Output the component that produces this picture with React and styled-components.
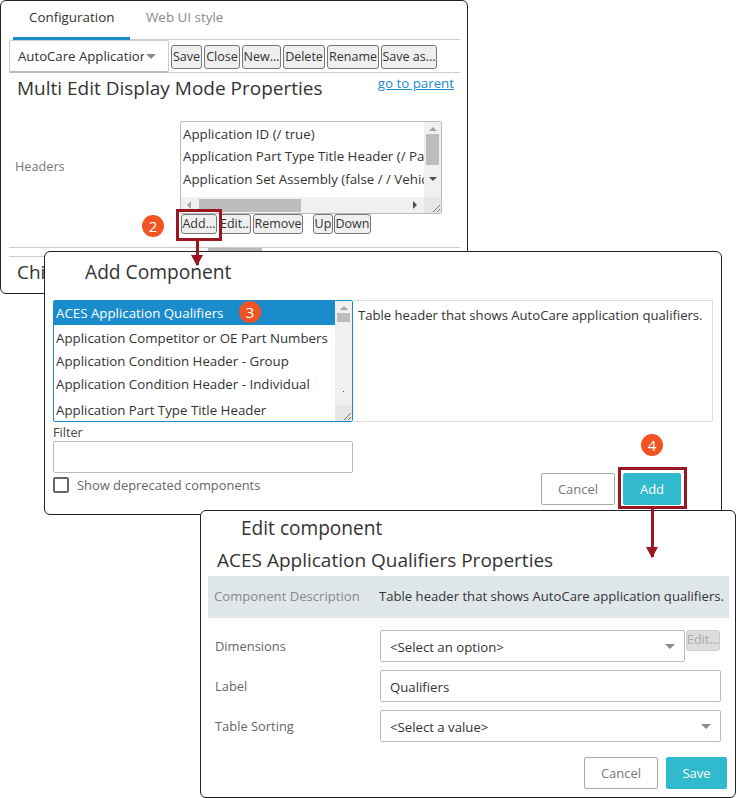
import React from "react";
import styled, { createGlobalStyle } from "styled-components";

const GlobalStyle = createGlobalStyle`
  html, body {
    margin: 0;
    padding: 0;
    background: #fff;
  }
  body {
    font-family: "Open Sans", "Noto Sans", sans-serif;
    font-size: 13px;
    color: #333;
  }
  * {
    box-sizing: border-box;
  }
`;

const Canvas = styled.div`
  position: relative;
  width: 736px;
  height: 798px;
  overflow: hidden;
`;

const Window = styled.section`
  position: absolute;
  left: ${(p) => p.$x}px;
  top: ${(p) => p.$y}px;
  width: ${(p) => p.$w}px;
  height: ${(p) => p.$h}px;
  background: #fff;
  border: 1px solid #222;
  border-radius: 6px;
  display: flex;
  flex-direction: column;
`;

const Tabs = styled.div`
  display: flex;
  margin: 0 7px 0 12px;
  height: 39px;
  border-bottom: 1px solid #ccc;
`;

const Tab = styled.div`
  width: ${(p) => p.$w}px;
  height: ${(p) => (p.$active ? 39 : 38)}px;
  padding: 7px 0 0 ${(p) => p.$pad}px;
  font-size: 13.4px;
  line-height: 18px;
  color: ${(p) => (p.$active ? "#333" : "#888")};
  border-bottom: ${(p) => (p.$active ? "3px solid #1a8ccc" : "none")};
`;

const Toolbar = styled.div`
  display: flex;
  align-items: flex-start;
  gap: 2px;
  margin: 0 7px 0 8px;
  height: 33px;
  border-bottom: 1px solid #ccc;
`;

const FakeDrop = styled.div`
  width: 160px;
  height: 33px;
  border: 1px solid #ccc;
  border-bottom: 2px solid #bbb;
  border-radius: 2px;
  display: flex;
  align-items: center;
  padding-left: 8px;
  font-size: 13.2px;
  color: #333;
`;

const DropText = styled.span`
  width: 126px;
  overflow: hidden;
  white-space: nowrap;
`;

const Caret = styled.span`
  width: 0;
  height: 0;
  margin-left: ${(p) => p.$ml || 0}px;
  border-left: 5px solid transparent;
  border-right: 5px solid transparent;
  border-top: 5px solid #8c8c8c;
`;

const SmallBtn = styled.button`
  width: ${(p) => p.$w}px;
  height: ${(p) => p.$h || 24}px;
  margin-left: ${(p) => p.$ml || 0}px;
  padding: 0;
  font-family: inherit;
  font-size: 12.5px;
  line-height: 1;
  color: ${(p) => (p.disabled ? "#aaa" : "#333")};
  background: ${(p) => (p.disabled ? "#ddd" : "#efefef")};
  border: 1px solid ${(p) => (p.disabled ? "#ccc" : "#777")};
  border-radius: 3px;
  white-space: nowrap;
  overflow: hidden;
`;

const ToolBtn = styled(SmallBtn)`
  margin-top: 5px;
`;

const HeadRow = styled.div`
  display: flex;
  justify-content: space-between;
  padding: 1px 13px 0 16px;
`;

const Heading = styled.h2`
  margin: 0;
  font-size: 19px;
  font-weight: 400;
  line-height: 28px;
  color: #333;
`;

const ParentLink = styled.a`
  font-size: 13.3px;
  line-height: 18px;
  color: #1a8ccc;
  text-decoration: underline;
`;

const HeadersRow = styled.div`
  display: flex;
  margin-top: 19px;
  padding-left: 14px;
`;

const FieldName = styled.div`
  width: 165px;
  padding-top: 36px;
  font-size: 12.7px;
  color: #777;
`;

const ListBox = styled.div`
  display: grid;
  grid-template-columns: 1fr 17px;
  grid-template-rows: 1fr 16px;
  width: ${(p) => p.$w}px;
  height: ${(p) => p.$h}px;
  border: 1px solid ${(p) => p.$edge || "#bbb"};
  border-radius: 2px;
  background: #fff;
`;

const ListItems = styled.div`
  grid-row: ${(p) => (p.$full ? "1 / 3" : "auto")};
  overflow: hidden;
  min-width: 0;
`;

const ListItem = styled.div`
  height: ${(p) => p.$h}px;
  line-height: ${(p) => p.$h}px;
  padding-left: 2px;
  font-size: 13.3px;
  white-space: nowrap;
  color: ${(p) => (p.$selected ? "#fff" : "#333")};
  background: ${(p) => (p.$selected ? "#1a8ccc" : "transparent")};
`;

const ScrollV = styled.div`
  background: #f0f0f0;
  display: flex;
  flex-direction: column;
  align-items: center;
  padding-top: 5px;
`;

const ThumbV = styled.div`
  width: 13px;
  height: ${(p) => p.$h}px;
  margin-top: 3px;
  background: #bdbdbd;
`;

const ArrowUp = styled.span`
  width: 0;
  height: 0;
  border-left: 4px solid transparent;
  border-right: 4px solid transparent;
  border-bottom: 4px solid #a3a3a3;
`;

const ArrowDown = styled.span`
  width: 0;
  height: 0;
  margin-top: ${(p) => p.$mt}px;
  border-left: 4px solid transparent;
  border-right: 4px solid transparent;
  border-top: 4px solid #505050;
`;

const ScrollDot = styled.span`
  width: 1px;
  height: 1px;
  margin-top: ${(p) => p.$mt}px;
  background: #505050;
`;

const ScrollH = styled.div`
  background: #f0f0f0;
  display: flex;
  align-items: center;
  padding-left: 6px;
`;

const ThumbH = styled.div`
  width: 102px;
  height: 13px;
  margin-left: 8px;
  background: #bdbdbd;
`;

const ArrowLeft = styled.span`
  width: 0;
  height: 0;
  border-top: 4px solid transparent;
  border-bottom: 4px solid transparent;
  border-right: 4px solid #a3a3a3;
`;

const ArrowRight = styled.span`
  width: 0;
  height: 0;
  margin-left: 112px;
  border-top: 4px solid transparent;
  border-bottom: 4px solid transparent;
  border-left: 4px solid #505050;
`;

const Corner = styled.div`
  grid-column: 2;
  background: #e6e6e6;
  display: flex;
  align-items: flex-end;
  justify-content: flex-end;
`;

const HeaderButtons = styled.div`
  display: flex;
  gap: 2px;
  height: 20px;
  margin: 0 0 0 180px;
`;

const Divider = styled.div`
  height: 1px;
  margin: ${(p) => p.$mt}px 7px 0 8px;
  background: #ccc;
`;

const SplitHandle = styled.div`
  width: 54px;
  height: 3px;
  margin-left: 207px;
  background: #bbb;
`;

const ChildHead = styled.div`
  padding: 1px 0 0 16px;
`;

const DialogTitle = styled.h2`
  margin: 0;
  padding-left: ${(p) => p.$pad}px;
  height: ${(p) => p.$h}px;
  font-size: ${(p) => p.$size}px;
  font-weight: 400;
  line-height: ${(p) => p.$h}px;
  color: #333;
`;

const PickerRow = styled.div`
  display: flex;
  margin: 8px 0 0 8px;
`;

const DescBox = styled.div`
  width: 360px;
  height: 122px;
  padding: 5px;
  border: 1px solid #ddd;
  border-left: none;
  font-size: 13.1px;
  line-height: 18px;
`;

const FilterLabel = styled.div`
  height: 19px;
  padding-top: 1px;
  line-height: 19px;
  font-size: 12.7px;
  color: #444;
`;

const TextField = styled.div`
  width: ${(p) => p.$w}px;
  height: 32px;
  padding: 1px 9px 0;
  display: flex;
  align-items: center;
  justify-content: space-between;
  border: 1px solid #bbb;
  border-radius: 2px;
  font-size: 13.2px;
  color: #333;
  background: #fff;
`;

const BottomRow = styled.div`
  display: flex;
  justify-content: space-between;
  padding-left: 8px;
`;

const Check = styled.label`
  display: flex;
  align-items: center;
  gap: 8px;
  height: 16px;
  margin-top: 4px;
  font-size: 12.9px;
  color: #666;
`;

const CheckBox = styled.span`
  width: 16px;
  height: 16px;
  border: 2px solid #666;
  border-radius: 2px;
`;

const ActionRow = styled.div`
  display: flex;
  justify-content: flex-end;
  gap: 8px;
  margin: ${(p) => p.$mt || 0}px ${(p) => p.$mr}px 0 0;
`;

const ActionBtn = styled.button`
  width: ${(p) => p.$w}px;
  height: 32px;
  padding: 0;
  font-family: inherit;
  font-size: 13px;
  border-radius: 2px;
  color: ${(p) => (p.$primary ? "#fff" : "#777")};
  background: ${(p) => (p.$primary ? "#31b9cd" : "#fff")};
  border: 1px solid ${(p) => (p.$primary ? "#31b9cd" : "#aaa")};
`;

const DescBand = styled.div`
  display: flex;
  align-items: center;
  height: 42px;
  margin: 0 6px 0 7px;
  padding: 0 0 2px 6px;
  background: #e0e7ea;
  font-size: 13.12px;
  white-space: nowrap;
`;

const BandLabel = styled.span`
  width: 165px;
  color: #888;
`;

const FormRows = styled.div`
  display: flex;
  flex-direction: column;
  gap: 8px;
  margin: 12px 0 0 14px;
`;

const FormRow = styled.div`
  display: flex;
  align-items: flex-start;
`;

const FormLabel = styled.div`
  width: 165px;
  line-height: 32px;
  font-size: 12.9px;
  color: #666;
`;

const EditSlot = styled.div`
  margin-left: 1px;
`;

const RedBox = styled.div`
  position: absolute;
  left: ${(p) => p.$x}px;
  top: ${(p) => p.$y}px;
  width: ${(p) => p.$w}px;
  height: ${(p) => p.$h}px;
  border: 3px solid #9b1620;
`;

const Arrow = styled.div`
  position: absolute;
  left: ${(p) => p.$x}px;
  top: ${(p) => p.$y}px;
  width: 3px;
  height: ${(p) => p.$h}px;
  background: #9b1620;

  &::after {
    content: "";
    position: absolute;
    left: -5px;
    bottom: -1px;
    border-left: 6.5px solid transparent;
    border-right: 6.5px solid transparent;
    border-top: 11px solid #9b1620;
  }
`;

const Badge = styled.div`
  position: absolute;
  left: ${(p) => p.$x - 11}px;
  top: ${(p) => p.$y - 11}px;
  width: 22px;
  height: 22px;
  border-radius: 50%;
  background: #f15423;
  color: #fff;
  font-size: 15px;
  line-height: 22px;
  text-align: center;
`;

const Grip = () => (
  <svg width="11" height="11" viewBox="0 0 11 11">
    <path d="M10 3 L3 10 M10 7 L7 10" stroke="#777" strokeWidth="1" fill="none" />
  </svg>
);

const App = () => {
  return (
    <Canvas>
      <GlobalStyle />

      <Window $x={0} $y={0} $w={468} $h={294}>
        <Tabs>
          <Tab $active $w={117} $pad={16}>Configuration</Tab>
          <Tab $w={120} $pad={16}>Web UI style</Tab>
        </Tabs>
        <Toolbar>
          <FakeDrop>
            <DropText>AutoCare Application</DropText>
            <Caret $ml={2} />
          </FakeDrop>
          <ToolBtn $w={31}>Save</ToolBtn>
          <ToolBtn $w={36}>Close</ToolBtn>
          <ToolBtn $w={39}>New...</ToolBtn>
          <ToolBtn $w={42}>Delete</ToolBtn>
          <ToolBtn $w={52}>Rename</ToolBtn>
          <ToolBtn $w={56}>Save as...</ToolBtn>
        </Toolbar>
        <HeadRow>
          <Heading>Multi Edit Display Mode Properties</Heading>
          <ParentLink>go to parent</ParentLink>
        </HeadRow>
        <HeadersRow>
          <FieldName>Headers</FieldName>
          <ListBox $w={262} $h={93}>
            <ListItems>
              <ListItem $h={24}>Application ID (/ true)</ListItem>
              <ListItem $h={21}>Application Part Type Title Header (/ Part Type)</ListItem>
              <ListItem $h={24}>Application Set Assembly (false / / Vehicle)</ListItem>
            </ListItems>
            <ScrollV>
              <ArrowUp />
              <ThumbV $h={31} />
              <ArrowDown $mt={12} />
            </ScrollV>
            <ScrollH>
              <ArrowLeft />
              <ThumbH />
              <ArrowRight />
            </ScrollH>
            <Corner><Grip /></Corner>
          </ListBox>
        </HeadersRow>
        <HeaderButtons>
          <SmallBtn $w={36} $h={20}>Add...</SmallBtn>
          <SmallBtn $w={32} $h={20}>Edit...</SmallBtn>
          <SmallBtn $w={50} $h={20}>Remove</SmallBtn>
          <SmallBtn $w={20} $h={20} $ml={8}>Up</SmallBtn>
          <SmallBtn $w={37} $h={20} $ml={-1}>Down</SmallBtn>
        </HeaderButtons>
        <Divider $mt={13} />
        <SplitHandle />
        <Divider $mt={5} />
        <ChildHead>
          <Heading>Child</Heading>
        </ChildHead>
      </Window>

      <Window $x={44} $y={251} $w={678} $h={264}>
        <DialogTitle $pad={40} $h={40} $size={19.2}>Add Component</DialogTitle>
        <PickerRow>
          <ListBox $w={300} $h={122} $edge="#1a8ccc">
            <ListItems $full>
              <ListItem $selected $h={24}>ACES Application Qualifiers</ListItem>
              <ListItem $h={26}>Application Competitor or OE Part Numbers</ListItem>
              <ListItem $h={21}>Application Condition Header - Group</ListItem>
              <ListItem $h={24}>Application Condition Header - Individual</ListItem>
              <ListItem $h={28}>Application Part Type Title Header</ListItem>
            </ListItems>
            <ScrollV>
              <ArrowUp />
              <ThumbV $h={9} />
              <ScrollDot $mt={69} />
            </ScrollV>
            <Corner><Grip /></Corner>
          </ListBox>
          <DescBox>Table header that shows AutoCare application qualifiers.</DescBox>
        </PickerRow>
        <BottomRow>
          <div>
            <FilterLabel>Filter</FilterLabel>
            <TextField $w={300} />
            <Check>
              <CheckBox />
              Show deprecated components
            </Check>
          </div>
          <ActionRow $mt={51} $mr={40}>
            <ActionBtn $w={74}>Cancel</ActionBtn>
            <ActionBtn $primary $w={58}>Add</ActionBtn>
          </ActionRow>
        </BottomRow>
      </Window>

      <Window $x={200} $y={510} $w={536} $h={288}>
        <DialogTitle $pad={40} $h={34} $size={19.1}>Edit component</DialogTitle>
        <DialogTitle $pad={16} $h={31} $size={19}>ACES Application Qualifiers Properties</DialogTitle>
        <DescBand>
          <BandLabel>Component Description</BandLabel>
          Table header that shows AutoCare application qualifiers.
        </DescBand>
        <FormRows>
          <FormRow>
            <FormLabel>Dimensions</FormLabel>
            <TextField $w={305}>
              &lt;Select an option&gt;
              <Caret />
            </TextField>
            <EditSlot>
              <SmallBtn $w={34} $h={21} disabled>Edit...</SmallBtn>
            </EditSlot>
          </FormRow>
          <FormRow>
            <FormLabel>Label</FormLabel>
            <TextField $w={341}>Qualifiers</TextField>
          </FormRow>
          <FormRow>
            <FormLabel>Table Sorting</FormLabel>
            <TextField $w={341}>
              &lt;Select a value&gt;
              <Caret />
            </TextField>
          </FormRow>
        </FormRows>
        <ActionRow $mt={15} $mr={8}>
          <ActionBtn $w={74}>Cancel</ActionBtn>
          <ActionBtn $primary $w={61}>Save</ActionBtn>
        </ActionRow>
      </Window>

      <RedBox $x={176} $y={209} $w={46} $h={32} />
      <Arrow $x={196} $y={240} $h={25} />
      <Badge $x={153} $y={226}>2</Badge>
      <Badge $x={250} $y={312}>3</Badge>
      <RedBox $x={618} $y={467} $w={69} $h={42} />
      <Arrow $x={651} $y={508} $h={49} />
      <Badge $x={652} $y={445}>4</Badge>
    </Canvas>
  );
};

export default App;
